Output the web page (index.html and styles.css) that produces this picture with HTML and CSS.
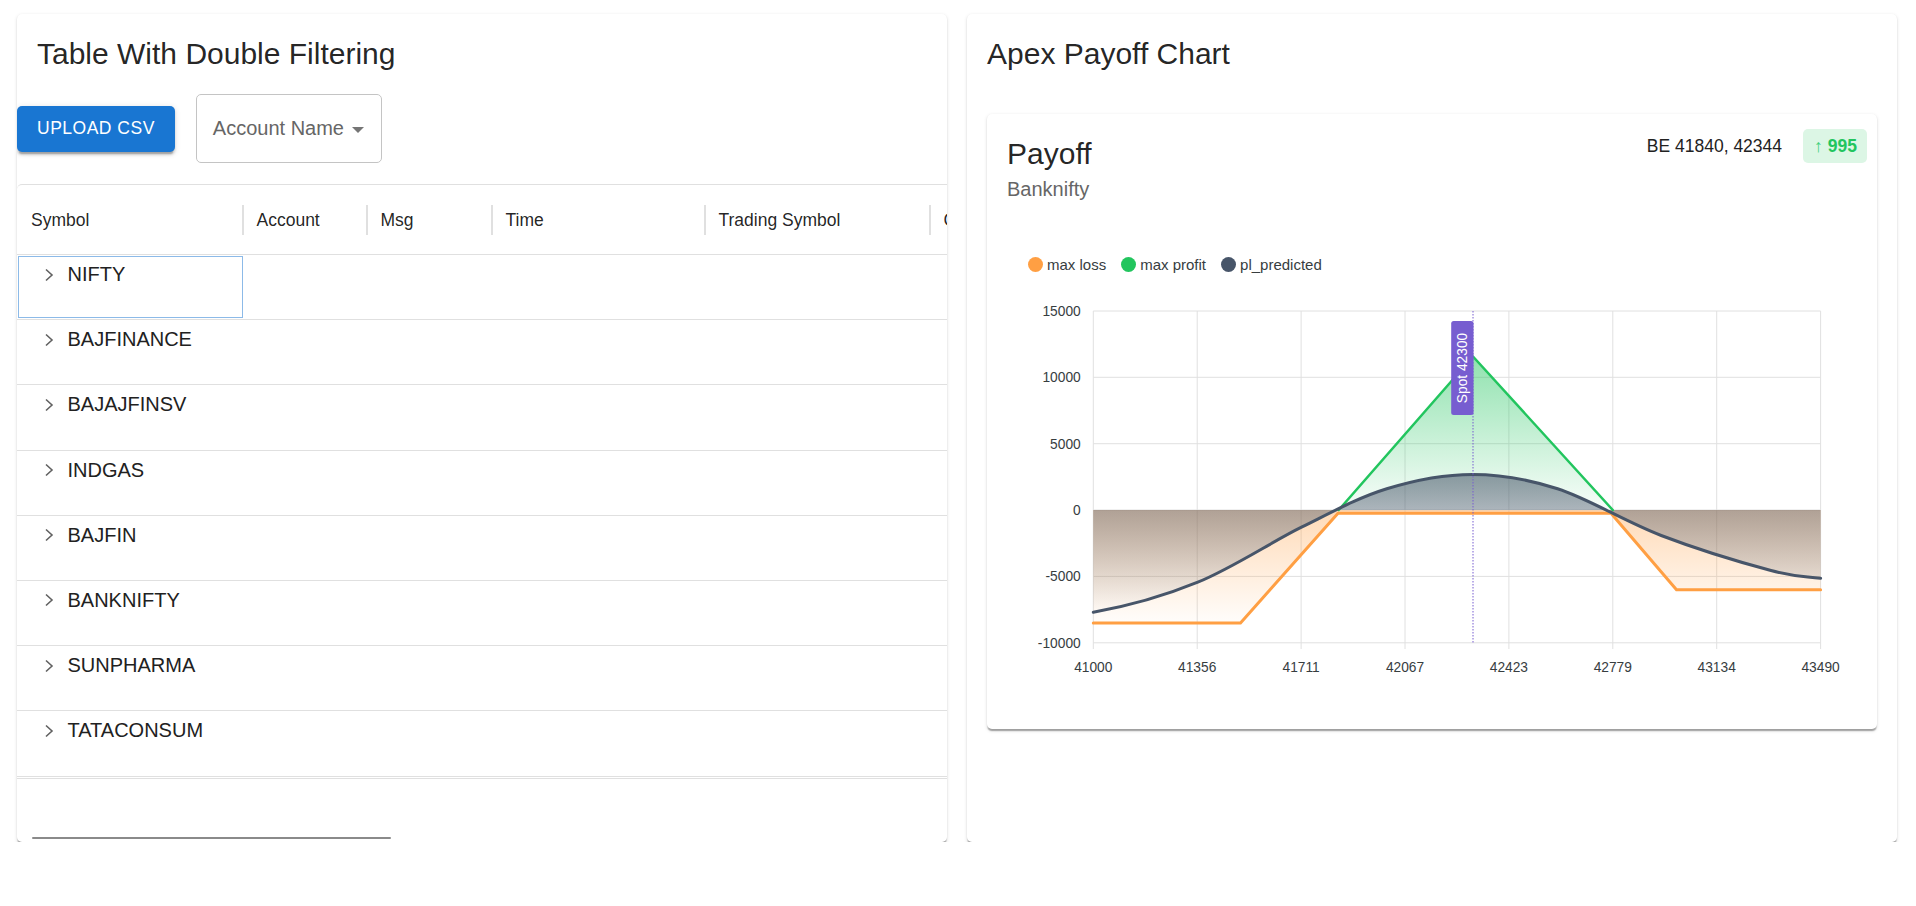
FILE: index.html
```html
<!DOCTYPE html>
<html lang="en">
<head>
<meta charset="utf-8">
<title>Dashboard</title>
<link rel="stylesheet" href="styles.css">
</head>
<body>
<div class="page">
  <section class="card">
    <h2 class="card-title">Table With Double Filtering</h2>
    <div class="toolbar">
      <button class="btn">Upload CSV</button>
      <div class="select">
        <span>Account Name</span>
        <svg class="caret" width="12" height="6" viewBox="0 0 12 6"><path d="M0 0 L12 0 L6 6 Z" fill="#757575"/></svg>
      </div>
    </div>
    <div class="table-wrap">
      <div class="table">
        <div class="thead">
          <div class="th c1"><span>Symbol</span><span class="sep"></span></div>
          <div class="th c2"><span>Account</span><span class="sep"></span></div>
          <div class="th c3"><span>Msg</span><span class="sep"></span></div>
          <div class="th c4"><span>Time</span><span class="sep"></span></div>
          <div class="th c5"><span>Trading Symbol</span><span class="sep"></span></div>
          <div class="th c6"><span>Created At</span><span class="sep"></span></div>
        </div>
        <div class="tbody">
          <div class="tr"><div class="td c1 sel"><div class="cell-line"><svg class="chev" width="10" height="14" viewBox="0 0 10 14"><polyline points="2,1.5 8,7 2,12.5"/></svg><span>NIFTY</span></div></div></div>
          <div class="tr"><div class="td c1"><div class="cell-line"><svg class="chev" width="10" height="14" viewBox="0 0 10 14"><polyline points="2,1.5 8,7 2,12.5"/></svg><span>BAJFINANCE</span></div></div></div>
          <div class="tr"><div class="td c1"><div class="cell-line"><svg class="chev" width="10" height="14" viewBox="0 0 10 14"><polyline points="2,1.5 8,7 2,12.5"/></svg><span>BAJAJFINSV</span></div></div></div>
          <div class="tr"><div class="td c1"><div class="cell-line"><svg class="chev" width="10" height="14" viewBox="0 0 10 14"><polyline points="2,1.5 8,7 2,12.5"/></svg><span>INDGAS</span></div></div></div>
          <div class="tr"><div class="td c1"><div class="cell-line"><svg class="chev" width="10" height="14" viewBox="0 0 10 14"><polyline points="2,1.5 8,7 2,12.5"/></svg><span>BAJFIN</span></div></div></div>
          <div class="tr"><div class="td c1"><div class="cell-line"><svg class="chev" width="10" height="14" viewBox="0 0 10 14"><polyline points="2,1.5 8,7 2,12.5"/></svg><span>BANKNIFTY</span></div></div></div>
          <div class="tr"><div class="td c1"><div class="cell-line"><svg class="chev" width="10" height="14" viewBox="0 0 10 14"><polyline points="2,1.5 8,7 2,12.5"/></svg><span>SUNPHARMA</span></div></div></div>
          <div class="tr"><div class="td c1"><div class="cell-line"><svg class="chev" width="10" height="14" viewBox="0 0 10 14"><polyline points="2,1.5 8,7 2,12.5"/></svg><span>TATACONSUM</span></div></div></div>
        </div>
      </div>
      <div class="tfoot"></div>
      <div class="hscroll"><div class="thumb"></div></div>
    </div>
  </section>

  <section class="card">
    <h2 class="card-title">Apex Payoff Chart</h2>
    <div class="chart-wrap">
      <div class="payoff">
        <div class="pc-header">
          <div class="pc-heading">
            <div class="pc-title">Payoff</div>
            <div class="pc-sub">Banknifty</div>
          </div>
          <div class="pc-action">
            <span class="be">BE 41840, 42344</span>
            <span class="badge"><span class="arrow">↑</span><b>995</b></span>
          </div>
        </div>
        <div class="chart">
          <div class="legend">
            <div class="lg-item"><span class="dot dot-loss"></span>max loss</div>
            <div class="lg-item"><span class="dot dot-profit"></span>max profit</div>
            <div class="lg-item"><span class="dot dot-pl"></span>pl_predicted</div>
          </div>
          <svg class="plot" width="890" height="410" viewBox="0 0 890 410">
            <defs>
              <linearGradient id="gOrange" gradientUnits="userSpaceOnUse" x1="0" y1="219.5" x2="0" y2="332.4">
                <stop offset="0" stop-color="#ff9f43" stop-opacity="0.38"/>
                <stop offset="1" stop-color="#ff9f43" stop-opacity="0.02"/>
              </linearGradient>
              <linearGradient id="gGreen" gradientUnits="userSpaceOnUse" x1="0" y1="66" x2="0" y2="219.5">
                <stop offset="0" stop-color="#22c55e" stop-opacity="0.5"/>
                <stop offset="1" stop-color="#22c55e" stop-opacity="0.03"/>
              </linearGradient>
              <linearGradient id="gSlate" gradientUnits="userSpaceOnUse" x1="0" y1="184" x2="0" y2="321.7">
                <stop offset="0" stop-color="#475569" stop-opacity="0.58"/>
                <stop offset="1" stop-color="#475569" stop-opacity="0"/>
              </linearGradient>
            </defs>
            <g class="grid">
              <line x1="106.3" y1="21" x2="833.6" y2="21"/>
              <line x1="106.3" y1="87.3" x2="833.6" y2="87.3"/>
              <line x1="106.3" y1="153.7" x2="833.6" y2="153.7"/>
              <line x1="106.3" y1="220" x2="833.6" y2="220"/>
              <line x1="106.3" y1="286.4" x2="833.6" y2="286.4"/>
              <line x1="106.3" y1="352.8" x2="833.6" y2="352.8"/>
              <line x1="106.3" y1="21" x2="106.3" y2="359"/>
              <line x1="210.2" y1="21" x2="210.2" y2="359"/>
              <line x1="314.1" y1="21" x2="314.1" y2="359"/>
              <line x1="418" y1="21" x2="418" y2="359"/>
              <line x1="521.9" y1="21" x2="521.9" y2="359"/>
              <line x1="625.8" y1="21" x2="625.8" y2="359"/>
              <line x1="729.7" y1="21" x2="729.7" y2="359"/>
              <line x1="833.6" y1="21" x2="833.6" y2="359"/>
            </g>
            <g class="ylab">
              <text x="93.7" y="26">15000</text>
              <text x="93.7" y="92.2">10000</text>
              <text x="93.7" y="158.6">5000</text>
              <text x="93.7" y="224.9">0</text>
              <text x="93.7" y="291.3">-5000</text>
              <text x="93.7" y="357.7">-10000</text>
            </g>
            <g class="xlab">
              <text x="106.3" y="381.6">41000</text>
              <text x="210.2" y="381.6">41356</text>
              <text x="314.1" y="381.6">41711</text>
              <text x="418" y="381.6">42067</text>
              <text x="521.9" y="381.6">42423</text>
              <text x="625.8" y="381.6">42779</text>
              <text x="729.7" y="381.6">43134</text>
              <text x="833.6" y="381.6">43490</text>
            </g>
            <g transform="translate(0,0.5)">
              <path d="M106.3,332.4 L253.5,332.4 L351,222.8 L624,222.8 L689.5,299.2 L833.6,299.2 L833.6,219.5 L106.3,219.5 Z" fill="url(#gOrange)"/>
              <path d="M351.7,219.5 L486,66 L625.8,219.5 Z" fill="url(#gGreen)"/>
              <path d="M106.3,321.7 C141,315.7 176.1,305.9 210.8,291.7 C245.5,277.5 283,252.3 314.5,236.7 C346,221.1 371.3,207.1 399.8,198.3 C428.3,189.5 457.1,184 485.6,184 C514.1,184 539.2,188.1 570.6,198.3 C602,208.5 638.6,231.4 674.2,245 C709.8,258.6 757.4,272.9 784,280 C810.6,287.1 817.6,285.5 833.6,287.7 L833.6,219.5 L106.3,219.5 Z" fill="url(#gSlate)"/>
              <path class="ln ln-loss" d="M106.3,332.4 L253.5,332.4 L351,222.8 L624,222.8 L689.5,299.2 L833.6,299.2"/>
              <path class="ln ln-profit" d="M351.7,219.5 L486,66 L625.8,219.5"/>
              <path class="ln ln-pl" d="M106.3,321.7 C141,315.7 176.1,305.9 210.8,291.7 C245.5,277.5 283,252.3 314.5,236.7 C346,221.1 371.3,207.1 399.8,198.3 C428.3,189.5 457.1,184 485.6,184 C514.1,184 539.2,188.1 570.6,198.3 C602,208.5 638.6,231.4 674.2,245 C709.8,258.6 757.4,272.9 784,280 C810.6,287.1 817.6,285.5 833.6,287.7"/>
            </g>
            <line class="spot-line" x1="486" y1="21" x2="486" y2="352.8"/>
            <rect x="464.2" y="31" width="22.3" height="94" rx="2.5" class="spot-box"/>
            <text class="spot-text" transform="translate(480.1,78) rotate(-90)">Spot 42300</text>
          </svg>
        </div>
      </div>
    </div>
  </section>
</div>
</body>
</html>
```

FILE: styles.css
```css
* { box-sizing: border-box; }

body {
  margin: 0;
  background: #fff;
  font-family: "Liberation Sans", Arial, sans-serif;
  color: rgba(0, 0, 0, 0.87);
}

.page {
  display: grid;
  grid-template-columns: 1fr 1fr;
  column-gap: 20px;
  padding: 14px 19px 0 17px;
  align-items: stretch;
}

.card {
  background: #fff;
  border-radius: 5px;
  box-shadow: 0 2.5px 1.25px -1.25px rgba(0, 0, 0, 0.2),
              0 1.25px 1.25px 0 rgba(0, 0, 0, 0.14),
              0 1.25px 3.75px 0 rgba(0, 0, 0, 0.12);
  padding-top: 20px;
  overflow: hidden;
}

.card-title {
  margin: 0;
  padding: 0 20px;
  font-size: 30px;
  line-height: 40px;
  font-weight: 400;
}

/* ---------- toolbar ---------- */
.toolbar {
  display: flex;
  align-items: center;
  gap: 21px;
  margin-top: 20px;
  height: 69px;
}

.btn {
  height: 46px;
  padding: 0 20px;
  border: 0;
  border-radius: 5px;
  background: #1976d2;
  color: #fff;
  font-family: "Liberation Sans", Arial, sans-serif;
  font-size: 17.5px;
  font-weight: 500;
  letter-spacing: 0.5px;
  text-transform: uppercase;
  box-shadow: 0 3.75px 1.25px -2.5px rgba(0, 0, 0, 0.2),
              0 2.5px 2.5px 0 rgba(0, 0, 0, 0.14),
              0 1.25px 6.25px 0 rgba(0, 0, 0, 0.12);
}

.select {
  height: 69px;
  width: 186px;
  border: 1px solid #c4c4c4;
  border-radius: 5px;
  display: flex;
  align-items: center;
  padding-left: 16px;
  font-size: 20px;
  color: #666;
}

.caret { margin-left: 8px; margin-top: 2px; }

/* ---------- table ---------- */
.table-wrap {
  margin-top: 21px;
  border-top: 1px solid #e0e0e0;
  border-top-left-radius: 5px;
}

.table { width: 2300px; }

.thead {
  display: flex;
  height: 70px;
  padding-top: 1px;
  border-bottom: 1px solid #e0e0e0;
}

.th {
  display: flex;
  align-items: center;
  justify-content: space-between;
  height: 100%;
  padding-left: 12.5px;
  font-size: 17.5px;
}

.th .sep {
  width: 2px;
  height: 30px;
  background: #e0e0e0;
}

.c1 { width: 227px; }
.th.c1 { padding-left: 14px; }
.c2 { width: 124px; }
.c3 { width: 125px; }
.c4 { width: 213px; }
.c5 { width: 225px; }
.c6 { width: 220px; }

.tr {
  display: flex;
  height: 65.2px;
  border-bottom: 1px solid #e0e0e0;
}

.td {
  height: 100%;
  padding-top: 8px;
  padding-left: 27px;
  font-size: 20px;
  color: #212121;
}

.td.sel {
  outline: 1px solid #8cbae8;
  outline-offset: -2px;
}

.cell-line {
  display: flex;
  align-items: center;
  height: 23px;
}

.chev {
  margin-right: 13.5px;
  fill: none;
  stroke: #616161;
  stroke-width: 1.6;
}

.tfoot {
  margin-top: 1px;
  border-top: 1px solid #e0e0e0;
  height: 59px;
}

.hscroll {
  height: 5px;
  padding-left: 15px;
}

.thumb {
  width: 359px;
  height: 2px;
  border-radius: 1px;
  background: #8a8a8a;
}

/* ---------- payoff card ---------- */
.chart-wrap { padding: 40px 20px 20px; }

.payoff {
  border-radius: 5px;
  background: #fff;
  box-shadow: 0 2.5px 1.25px -1.25px rgba(0, 0, 0, 0.2),
              0 1.25px 1.25px 0 rgba(0, 0, 0, 0.14),
              0 1.25px 3.75px 0 rgba(0, 0, 0, 0.12);
}

.pc-header {
  display: flex;
  justify-content: space-between;
  padding: 20px;
}

.pc-title {
  font-size: 30px;
  line-height: 40px;
}

.pc-sub {
  font-size: 20px;
  line-height: 30px;
  color: #666;
}

.pc-action {
  display: flex;
  align-items: center;
  gap: 21px;
  margin: -5px -10px 0 0;
  align-self: flex-start;
}

.be { font-size: 17.5px; color: #222; }

.badge {
  display: flex;
  align-items: center;
  height: 34px;
  padding: 0 10px 0 11px;
  border-radius: 5px;
  background: #dcf6e5;
  color: #22c55e;
  font-size: 17.5px;
}

.badge .arrow { color: #3fd07a; }
.badge b { margin-left: 5px; font-weight: 700; }

.chart { padding: 30px 0 29px; }

.legend {
  display: flex;
  align-items: center;
  height: 20px;
  padding-left: 41px;
  font-size: 15px;
  color: #373d3f;
}

.lg-item {
  display: flex;
  align-items: center;
  margin-right: 15px;
}

.dot {
  width: 15px;
  height: 15px;
  border-radius: 50%;
  margin-right: 4px;
}

.dot-loss { background: #ff9f43; }
.dot-profit { background: #22c55e; }
.dot-pl { background: #475569; }

.plot { display: block; margin-top: 16px; }

.grid line { stroke: #e0e0e0; stroke-width: 1; }

.ylab text, .xlab text {
  font-family: "Liberation Sans", Arial, sans-serif;
  font-size: 13.75px;
  fill: #373d3f;
}

.ylab text { text-anchor: end; }
.xlab text { text-anchor: middle; }

.ln { fill: none; stroke-linejoin: round; stroke-linecap: round; }
.ln-loss { stroke: #ff9f43; stroke-width: 3; }
.ln-profit { stroke: #22c55e; stroke-width: 2.5; }
.ln-pl { stroke: #475569; stroke-width: 3; }

.spot-line { stroke: #775dd0; stroke-width: 1; stroke-dasharray: 1.5 1.5; }
.spot-box { fill: #775dd0; }

.spot-text {
  font-family: "Liberation Sans", Arial, sans-serif;
  font-size: 13.75px;
  fill: #fff;
  text-anchor: middle;
}
```
